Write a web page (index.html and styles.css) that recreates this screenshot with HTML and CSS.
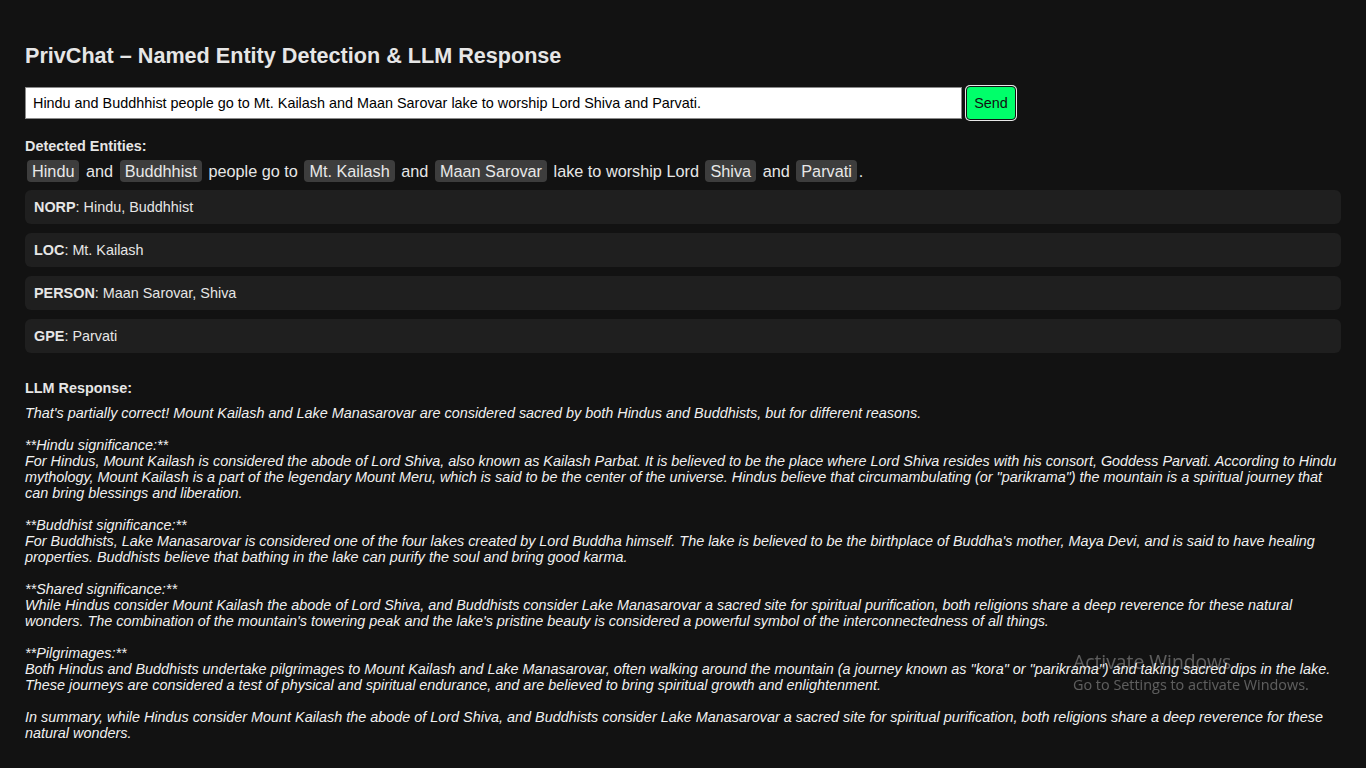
FILE: index.html
```html
<!DOCTYPE html>
<html lang="en">
<head>
<meta charset="utf-8">
<title>PrivChat</title>
<link rel="stylesheet" href="styles.css">
</head>
<body>
<main class="app">
  <h1 class="title">PrivChat – Named Entity Detection &amp; LLM Response</h1>
  <form class="composer">
    <input class="prompt" type="text" value="Hindu and Buddhhist people go to Mt. Kailash and Maan Sarovar lake to worship Lord Shiva and Parvati.">
    <button class="send" type="button">Send</button>
  </form>

  <section class="entities">
    <h2 class="label">Detected Entities:</h2>
    <p class="marked"><span class="chip">Hindu</span> and <span class="chip">Buddhhist</span> people go to <span class="chip">Mt. Kailash</span> and <span class="chip">Maan Sarovar</span> lake to worship Lord <span class="chip">Shiva</span> and <span class="chip">Parvati</span>.</p>
    <div class="group"><strong>NORP</strong>: Hindu, Buddhhist</div>
    <div class="group"><strong>LOC</strong>: Mt. Kailash</div>
    <div class="group"><strong>PERSON</strong>: Maan Sarovar, Shiva</div>
    <div class="group"><strong>GPE</strong>: Parvati</div>
  </section>

  <section class="response">
    <h2 class="label">LLM Response:</h2>
    <div class="answer">That's partially correct! Mount Kailash and Lake Manasarovar are considered sacred by both Hindus and Buddhists, but for different reasons.

**Hindu significance:**
For Hindus, Mount Kailash is considered the abode of Lord Shiva, also known as Kailash Parbat. It is believed to be the place where Lord Shiva resides with his consort, Goddess Parvati. According to Hindu mythology, Mount Kailash is a part of the legendary Mount Meru, which is said to be the center of the universe. Hindus believe that circumambulating (or "parikrama") the mountain is a spiritual journey that can bring blessings and liberation.

**Buddhist significance:**
For Buddhists, Lake Manasarovar is considered one of the four lakes created by Lord Buddha himself. The lake is believed to be the birthplace of Buddha's mother, Maya Devi, and is said to have healing properties. Buddhists believe that bathing in the lake can purify the soul and bring good karma.

**Shared significance:**
While Hindus consider Mount Kailash the abode of Lord Shiva, and Buddhists consider Lake Manasarovar a sacred site for spiritual purification, both religions share a deep reverence for these natural wonders. The combination of the mountain's towering peak and the lake's pristine beauty is considered a powerful symbol of the interconnectedness of all things.

**Pilgrimages:**
Both Hindus and Buddhists undertake pilgrimages to Mount Kailash and Lake Manasarovar, often walking around the mountain (a journey known as "kora" or "parikrama") and taking sacred dips in the lake. These journeys are considered a test of physical and spiritual endurance, and are believed to bring spiritual growth and enlightenment.

In summary, while Hindus consider Mount Kailash the abode of Lord Shiva, and Buddhists consider Lake Manasarovar a sacred site for spiritual purification, both religions share a deep reverence for these natural wonders.</div>
  </section>
</main>
<div class="watermark">
  <div class="wm-title">Activate Windows</div>
  <div class="wm-sub">Go to Settings to activate Windows.</div>
</div>
</body>
</html>
```
FILE: styles.css
```css
html, body {
  margin: 0;
  padding: 0;
  background: #121212;
}
body {
  font-family: "Liberation Sans", Arial, sans-serif;
  color: #e6e6e6;
  font-size: 14.4px;
}
.app {
  padding: 42px 25px 20px 25px;
}
.title {
  margin: 0;
  font-size: 21.6px;
  line-height: 27px;
  font-weight: bold;
  color: #e6e6e6;
}
.composer {
  display: flex;
  align-items: center;
  gap: 4px;
  margin-top: 17px;
}
.prompt {
  box-sizing: border-box;
  width: 937px;
  height: 32px;
  padding: 0 7px;
  border: 1px solid #8a8a8a;
  background: #ffffff;
  color: #000;
  font-family: "Liberation Sans", Arial, sans-serif;
  font-size: 14.4px;
  border-radius: 0;
  outline: none;
}
.send {
  box-sizing: border-box;
  height: 34px;
  width: 50px;
  padding: 0;
  background: #00ff6a;
  color: #111;
  border: 1px solid #111;
  border-radius: 4px;
  box-shadow: 0 0 0 1px #e8e8e8;
  font-family: "Liberation Sans", Arial, sans-serif;
  font-size: 14.4px;
}
.label {
  margin: 0;
  font-size: 14.4px;
  font-weight: bold;
  line-height: 16px;
}
.entities {
  margin-top: 18px;
}
.marked {
  margin: 5px 0 7px 0;
  font-size: 16.25px;
  line-height: 24px;
}
.chip {
  background: #3d3d3d;
  color: #e8e8e8;
  padding: 2px 5px;
  border-radius: 4px;
  margin: 0 2px;
}
.group {
  background: #1f1f1f;
  border-radius: 6px;
  padding: 9px 9px;
  line-height: 16px;
  margin-bottom: 9px;
}
.response {
  margin-top: 27px;
}
.answer {
  margin-top: 9px;
  white-space: pre-wrap;
  font-style: italic;
  line-height: 16px;
  color: #f0f0f0;
}
.watermark {
  position: fixed;
  left: 1073px;
  top: 648px;
  color: rgba(255, 255, 255, 0.32);
  font-family: "Open Sans", "Noto Sans", sans-serif;
  pointer-events: none;
}
.wm-title {
  font-size: 19.3px;
  line-height: 27px;
}
.wm-sub {
  font-size: 14.4px;
  line-height: 20px;
}
```
